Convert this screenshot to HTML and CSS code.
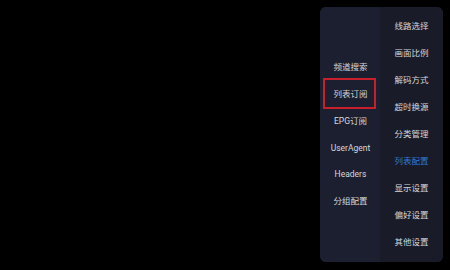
FILE: index.html
```html
<!DOCTYPE html>
<html>
<head>
<meta charset="utf-8">
<link rel="stylesheet" href="styles.css">
</head>
<body>
<div class="screen">
  <div class="panel">
    <div class="col col-left">
      <div class="item">频道搜索</div>
      <div class="item focused">列表订阅</div>
      <div class="item">EPG订阅</div>
      <div class="item">UserAgent</div>
      <div class="item">Headers</div>
      <div class="item">分组配置</div>
    </div>
    <div class="col col-right">
      <div class="item">线路选择</div>
      <div class="item">画面比例</div>
      <div class="item">解码方式</div>
      <div class="item">超时换源</div>
      <div class="item">分类管理</div>
      <div class="item active">列表配置</div>
      <div class="item">显示设置</div>
      <div class="item">偏好设置</div>
      <div class="item">其他设置</div>
    </div>
  </div>
</div>
</body>
</html>
```

FILE: styles.css
```css
html, body {
  margin: 0;
  padding: 0;
  background: #000;
}
.screen {
  width: 450px;
  height: 270px;
  display: flex;
  justify-content: flex-end;
  align-items: flex-start;
  padding: 7px 7px 0 0;
  box-sizing: border-box;
  font-family: Roboto, "Noto Sans CJK SC", sans-serif;
  font-size: 8.5px;
  color: #d6d7db;
}
.panel {
  width: 123px;
  height: 255px;
  display: flex;
  border-radius: 6px;
  overflow: hidden;
  background: #1b1e2e;
}
.col {
  display: flex;
  flex-direction: column;
  justify-content: center;
}
.col-left {
  width: 60px;
  background: #1c1f2f;
}
.col-right {
  width: 63px;
  background: #191b29;
}
.item {
  height: 26.9px;
  line-height: 26.9px;
  text-align: center;
  white-space: nowrap;
  position: relative;
}
.col-left .item {
  padding-left: 1px;
}
.focused::after {
  content: "";
  position: absolute;
  left: 3px;
  right: 4px;
  top: -3px;
  bottom: -1px;
  border: 2px solid #c8202a;
}
.active {
  color: #2f7ad6;
}
```
